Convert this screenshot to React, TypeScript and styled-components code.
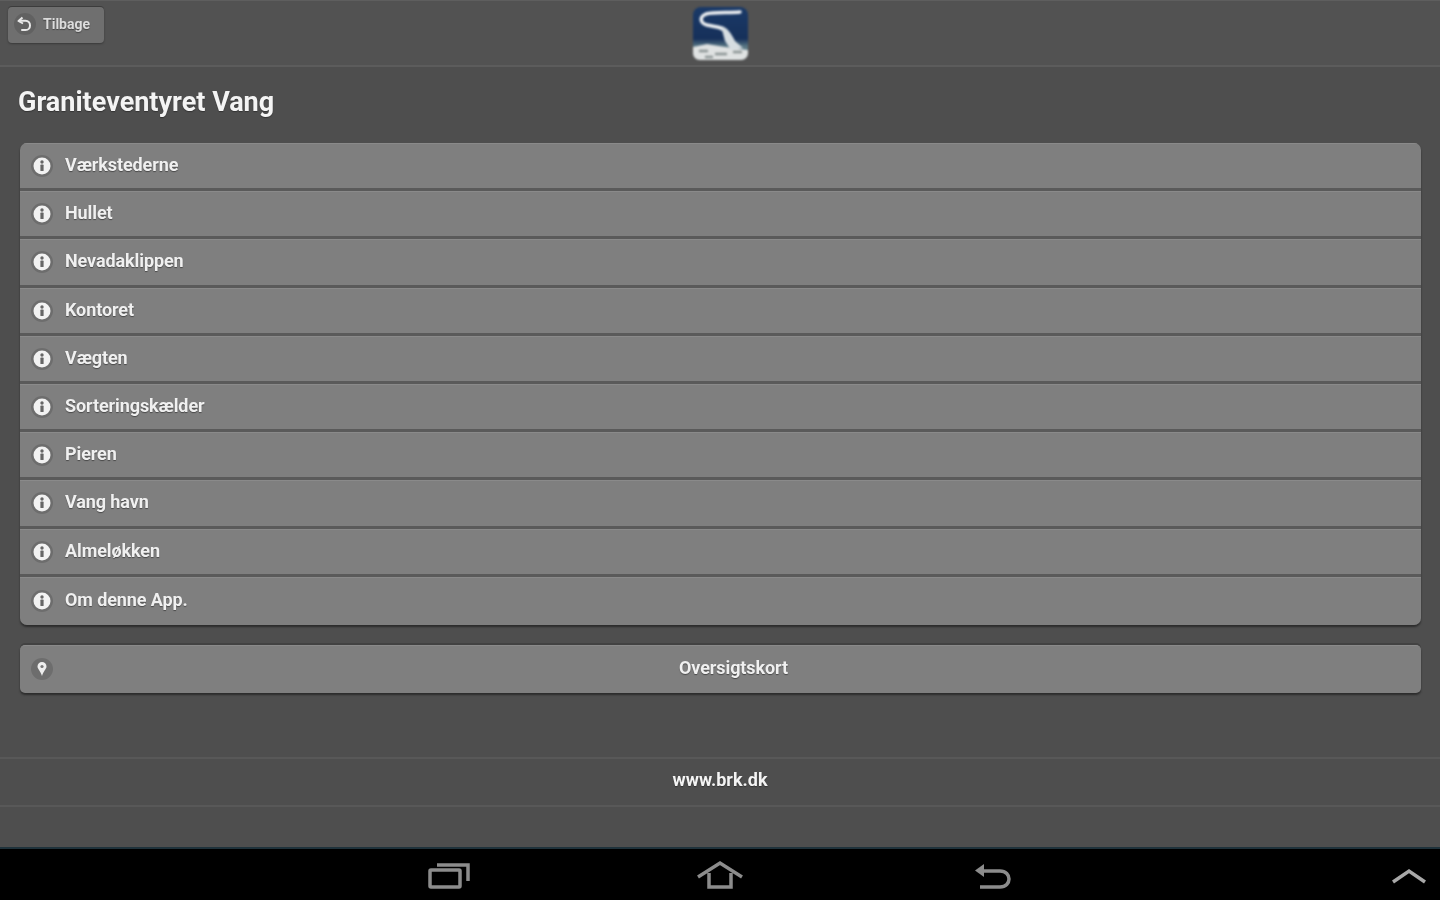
import styled, { createGlobalStyle } from 'styled-components'

const GlobalStyle = createGlobalStyle`
  html, body {
    margin: 0;
    padding: 0;
    background: #4e4e4e;
  }
  body {
    font-family: Roboto, 'Liberation Sans', sans-serif;
    overflow: hidden;
  }
`

const places = [
  'Værkstederne',
  'Hullet',
  'Nevadaklippen',
  'Kontoret',
  'Vægten',
  'Sorteringskælder',
  'Pieren',
  'Vang havn',
  'Almeløkken',
  'Om denne App.',
]

const InfoIcon = () => (
  <IconDisc>
    <svg width="18" height="18" viewBox="0 0 18 18">
      <circle cx="9" cy="9" r="8.5" fill="#f2f2f2" />
      <rect x="7.4" y="7.6" width="3.2" height="6.4" rx="0.6" fill="#666" />
      <circle cx="9" cy="5" r="1.7" fill="#666" />
    </svg>
  </IconDisc>
)

const PinIcon = () => (
  <PinSlot>
    <IconDisc>
      <svg width="18" height="18" viewBox="0 0 18 18">
        <path d="M9 2a4.500 4.500 0 0 1 4.500 4.500c0 2.500-3 4.500-4.500 9.500-1.500-5-4.500-7-4.500-9.500A4.500 4.500 0 0 1 9 2z" fill="#eeeeee" />
        <circle cx="9" cy="6.500" r="1.600" fill="#777" />
      </svg>
    </IconDisc>
  </PinSlot>
)

const Logo = () => (
  <svg width="58" height="56" viewBox="0 0 58 56">
    <defs>
      <linearGradient id="logoSky" x1="0" y1="0" x2="0" y2="1">
        <stop offset="0" stopColor="#1a3a68" />
        <stop offset="0.6" stopColor="#16305a" />
        <stop offset="0.75" stopColor="#5c7a86" />
      </linearGradient>
    </defs>
    <rect x="2" y="2" width="55" height="53" rx="8" fill="url(#logoSky)" />
    <path d="M2 42 L16 39 L34 42 L57 45 V48 C57 52 54 55 50 55 H9 C5 55 2 52 2 48 Z" fill="#dfe2e2" />
    <path d="M8 46h9M24 49h12M42 47h9M14 52h8" stroke="#8b9494" strokeWidth="2.500" fill="none" />
    <path
      d="M49 7 C38 8 22 7 15 9 C8 12 9 18 16 20 C24 22 30 21 35 27"
      stroke="#eef1f3"
      strokeWidth="3.500"
      strokeLinecap="round"
      fill="none"
    />
    <path d="M30 21 C36 22 40 28 44 36 L52 43 L40 45 L34 36 Z" fill="#d6dde1" />
  </svg>
)

const BackIcon = () => (
  <BackDisc>
    <svg width="18" height="18" viewBox="0 0 18 18" fill="none">
      <path d="M6.500 2.500 L2.500 6 L7 8.500" stroke="#e8e8e8" strokeWidth="2" strokeLinejoin="round" />
      <path
        d="M4 5.800 H9.500 C15.500 5.800 15.500 15 9.500 15 H6"
        stroke="#e8e8e8"
        strokeWidth="2"
        strokeLinecap="round"
      />
    </svg>
  </BackDisc>
)

export default function App() {
  return (
    <Screen>
      <GlobalStyle />
      <Page>
        <Header>
          <BackButton>
            <BackIcon />
            <BackLabel>Tilbage</BackLabel>
          </BackButton>
          <LogoSlot>
            <Logo />
          </LogoSlot>
        </Header>
        <Title>Graniteventyret Vang</Title>
        <List>
          {places.map((place) => (
            <Row key={place}>
              <InfoIcon />
              <RowLabel>{place}</RowLabel>
            </Row>
          ))}
        </List>
        <MapButton>
          <PinIcon />
          <MapLabel>Oversigtskort</MapLabel>
        </MapButton>
        <Footer>
          <FooterLabel>www.brk.dk</FooterLabel>
        </Footer>
      </Page>
      <NavBar>
        <NavIcons>
          <svg width="44" height="30" viewBox="0 0 44 30" fill="none" stroke="#8c8c8c" strokeWidth="3.500">
            <rect x="2" y="10" width="30" height="17" rx="1" />
            <path d="M9 5H40V21" />
          </svg>
          <svg width="50" height="30" viewBox="0 0 50 30" fill="none" stroke="#8c8c8c" strokeWidth="3.500">
            <path d="M2 17 L24 3 L46 17" />
            <path d="M13 13V27H35V13" />
          </svg>
          <BackNavIcon>
            <svg width="38" height="30" viewBox="0 0 38 30" fill="none" stroke="#8c8c8c" strokeWidth="3.500">
              <path d="M8 11H26C38 11 38 27 26 27H6" />
              <path d="M10 4V17L1 10.500Z" fill="#8c8c8c" stroke="none" />
            </svg>
          </BackNavIcon>
        </NavIcons>
        <Chevron>
          <svg width="36" height="16" viewBox="0 0 36 16" fill="none" stroke="#a8a8a8" strokeWidth="3.500">
            <path d="M2 14 L18 3 L34 14" />
          </svg>
        </Chevron>
      </NavBar>
    </Screen>
  )
}

const Screen = styled.div`
  width: 1440px;
  height: 900px;
  display: flex;
  flex-direction: column;
  background: #4e4e4e;
`

const Page = styled.main`
  flex: 1;
  display: flex;
  flex-direction: column;
  min-height: 0;
  border-bottom: 2px solid #1f323b;
`

const Header = styled.header`
  position: relative;
  height: 67px;
  flex: none;
  box-sizing: border-box;
  padding: 6px 8px 0;
  background: #525252;
  border-top: 1px solid #5e5e5e;
  border-bottom: 2px solid #5c5c5c;
`

const BackButton = styled.div`
  width: 96px;
  height: 36px;
  box-sizing: border-box;
  display: flex;
  align-items: center;
  gap: 7px;
  padding: 0 0 3px 6px;
  background: #6f6f6f;
  border-radius: 4px;
  box-shadow: 0 -1px 0 #3c3c3c, 0 1px 2px #3a3a3a;
`

const BackDisc = styled.span`
  width: 22px;
  height: 22px;
  flex: none;
  display: flex;
  align-items: center;
  justify-content: center;
  border-radius: 50%;
  background: rgba(0, 0, 0, 0.12);
  filter: blur(0.5px);
`

const BackLabel = styled.span`
  font-size: 14px;
  font-weight: 700;
  color: #dcdcdc;
  text-shadow: 0 1px 1px #444;
  filter: blur(0.7px);
`

const LogoSlot = styled.div`
  position: absolute;
  left: 691px;
  top: 4px;
  filter: blur(1.2px);
`

const Title = styled.h1`
  margin: 0;
  padding: 20px 0 0 18px;
  height: 76px;
  box-sizing: border-box;
  font-size: 27px;
  line-height: 30px;
  font-weight: 700;
  color: #f4f4f4;
  text-shadow: 0 1px 1px #333;
  filter: blur(0.6px);
`

const List = styled.div`
  margin: 0 19px 0 20px;
  height: 482px;
  display: grid;
  grid-template-rows: repeat(10, 1fr);
  border-radius: 7px;
  overflow: hidden;
  box-shadow: 0 2px 2px #2c2c2c;
  flex: none;
`

const Row = styled.div`
  display: flex;
  align-items: center;
  gap: 12px;
  padding: 0 0 0 11px;
  background: #7f7f7f;
  border-top: 1px solid #8a8a8a;
  border-bottom: 3px solid #5a5a5a;
  &:last-child {
    border-bottom: 0;
  }
`

const IconDisc = styled.span`
  width: 22px;
  height: 22px;
  flex: none;
  display: flex;
  align-items: center;
  justify-content: center;
  border-radius: 50%;
  background: rgba(0, 0, 0, 0.14);
  filter: blur(0.5px);
`

const PinSlot = styled.span`
  position: absolute;
  left: 11px;
  top: 12px;
`

const RowLabel = styled.span`
  font-size: 18px;
  font-weight: 700;
  letter-spacing: -0.1px;
  color: #f0f0f0;
  text-shadow: 0 1px 1px #4a4a4a;
  filter: blur(0.7px);
  padding-bottom: 3px;
`

const MapButton = styled.div`
  position: relative;
  margin: 20px 19px 0 20px;
  height: 47px;
  flex: none;
  display: flex;
  align-items: center;
  justify-content: center;
  background: #7f7f7f;
  border-radius: 5px;
  border-top: 1px solid #8a8a8a;
  box-shadow: 0 -2px 0 #424242, 0 2px 2px #2c2c2c;
`

const MapLabel = styled(RowLabel)`
  margin-left: 26px;
  padding-bottom: 4px;
`

const Footer = styled.footer`
  margin-top: 64px;
  height: 50px;
  flex: none;
  box-sizing: border-box;
  display: flex;
  align-items: center;
  justify-content: center;
  padding-bottom: 5px;
  border-top: 2px solid #585858;
  border-bottom: 2px solid #585858;
`

const FooterLabel = styled.span`
  font-size: 18px;
  font-weight: 700;
  color: #f4f4f4;
  text-shadow: 0 1px 1px #333;
  filter: blur(0.6px);
`

const NavBar = styled.nav`
  position: relative;
  height: 51px;
  flex: none;
  background: #000;
  display: flex;
  align-items: center;
  justify-content: center;
`

const NavIcons = styled.div`
  display: flex;
  align-items: center;
  gap: 224px;
  filter: blur(0.7px);
`

const BackNavIcon = styled.span`
  display: flex;
  margin-left: 4px;
`

const Chevron = styled.div`
  position: absolute;
  right: 13px;
  top: 19px;
  filter: blur(0.7px);
`
